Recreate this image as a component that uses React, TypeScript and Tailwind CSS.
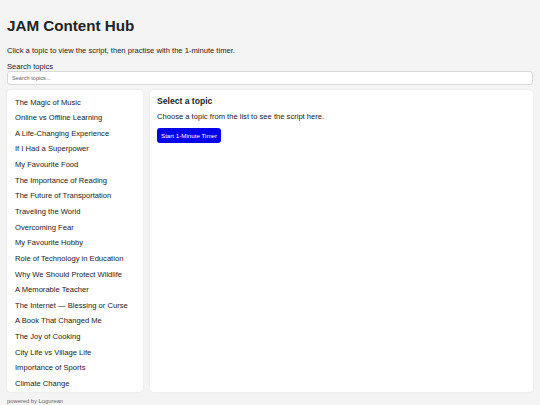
import React from "react";

const topics = [
  "The Magic of Music",
  "Online vs Offline Learning",
  "A Life-Changing Experience",
  "If I Had a Superpower",
  "My Favourite Food",
  "The Importance of Reading",
  "The Future of Transportation",
  "Traveling the World",
  "Overcoming Fear",
  "My Favourite Hobby",
  "Role of Technology in Education",
  "Why We Should Protect Wildlife",
  "A Memorable Teacher",
  "The Internet — Blessing or Curse",
  "A Book That Changed Me",
  "The Joy of Cooking",
  "City Life vs Village Life",
  "Importance of Sports",
  "Climate Change",
];

export default function App() {
  return (
    <div
      className="w-[540px] h-[405px] overflow-hidden bg-[#f4f4f4] text-[#222] px-[7px] flex flex-col"
      style={{ fontFamily: '"Liberation Sans", Arial, sans-serif' }}
    >
      <h1 className="text-[15.2px] font-bold leading-none mt-[18px]">JAM Content Hub</h1>
      <p className="text-[7.6px] leading-none mt-[14px] text-[#222]">
        Click a topic to view the script, then practise with the 1-minute timer.
      </p>
      <label className="text-[7.6px] leading-none mt-[8px] text-[#222]">Search topics</label>
      <input
        className="mt-[1px] h-[14px] w-full rounded-[3px] border border-[#d8d8d8] bg-white px-[4px] text-[5.6px] outline-none placeholder:text-[#666]"
        placeholder="Search topics..."
      />
      <div className="mt-[5px] flex gap-[7px] h-[302px]">
        <div className="w-[136px] rounded-[4px] bg-white shadow-[0_0_2px_rgba(0,0,0,0.08)] pt-[4px] px-[8px]">
          {topics.map((t) => (
            <div key={t} className="h-[15.65px] flex items-center text-[7.6px] text-[#222] whitespace-nowrap">
              {t}
            </div>
          ))}
        </div>
        <div className="flex-1 rounded-[4px] bg-white shadow-[0_0_2px_rgba(0,0,0,0.08)] px-[7px] pt-[7px]">
          <h3 className="text-[8.6px] font-bold leading-none">Select a topic</h3>
          <p className="text-[7.6px] leading-none mt-[7px]">Choose a topic from the list to see the script here.</p>
          <button className="mt-[7px] h-[15px] px-[4px] rounded-[3px] bg-[#0000ee] text-white text-[6.2px] leading-none">
            Start 1-Minute Timer
          </button>
        </div>
      </div>
      <div className="mt-[7px] text-[5.8px] text-[#666] leading-none">powered by Logurean</div>
    </div>
  );
}
